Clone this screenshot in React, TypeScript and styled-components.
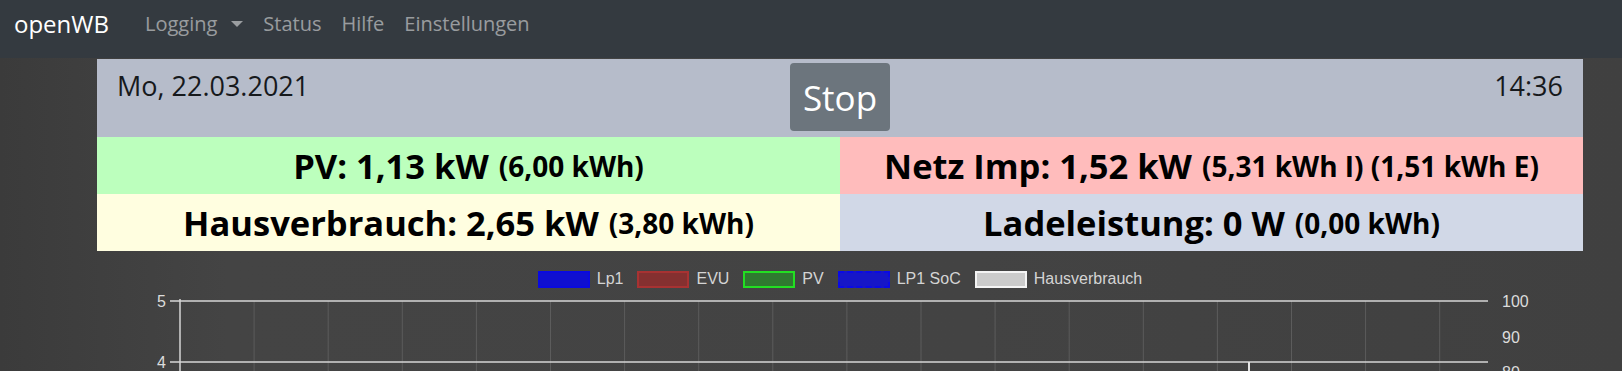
import React from 'react';
import styled, { createGlobalStyle, css } from 'styled-components';

const GlobalStyle = createGlobalStyle`
  html, body {
    margin: 0;
    padding: 0;
  }

  body {
    min-height: 371px;
    overflow: hidden;
    background: linear-gradient(to right, #3b3b3b 0%, #444444 14%, #434343 60%, #404040 100%);
    font-family: "Open Sans", "Noto Sans", sans-serif;
  }
`;

const Navbar = styled.nav`
  display: flex;
  align-items: center;
  box-sizing: border-box;
  height: 58px;
  padding: 0 14px 12px;
  background: #343a40;
`;

const Brand = styled.a`
  margin-right: 26px;
  font-size: 24px;
  color: #fff;
  text-decoration: none;
`;

const NavLink = styled.a<{ $dropdown?: boolean }>`
  padding: 0 10px;
  font-size: 20px;
  color: rgba(255, 255, 255, 0.5);
  text-decoration: none;

  ${({ $dropdown }) =>
    $dropdown &&
    css`
      &::after {
        content: '';
        display: inline-block;
        margin-left: 14px;
        vertical-align: 4px;
        border-top: 6px solid;
        border-left: 6px solid transparent;
        border-right: 6px solid transparent;
      }
    `}
`;

const Main = styled.main`
  width: 1486px;
  margin: 1px 0 0 97px;
`;

const Panel = styled.section`
  display: grid;
  grid-template-columns: 1fr 1fr;
`;

const DateRow = styled.div`
  grid-column: 1 / -1;
  display: grid;
  grid-template-columns: 1fr auto 1fr;
  align-items: start;
  box-sizing: border-box;
  height: 78px;
  padding: 0 20px;
  background: #b6bcca;
  color: #16191c;
`;

const Clock = styled.span<{ $align: 'left' | 'right' }>`
  padding-top: 9px;
  font-size: 27px;
  line-height: 1.36;
  text-align: ${({ $align }) => $align};
`;

const StopButton = styled.button`
  display: flex;
  align-items: center;
  height: 68px;
  margin-top: 4px;
  padding: 0 13px;
  border: none;
  border-radius: 4px;
  background: #6c757d;
  color: #fff;
  font-family: inherit;
  font-size: 35px;
`;

const Cell = styled.div<{ $bg: string }>`
  display: flex;
  align-items: center;
  justify-content: center;
  height: 57px;
  background: ${({ $bg }) => $bg};
  color: #000;
  font-size: 34.5px;
  font-weight: 700;
  white-space: nowrap;

  small {
    margin-left: 10px;
    font-size: 28px;
    font-weight: 700;
  }
`;

const ChartSection = styled.section`
  margin-top: 20px;
`;

const Legend = styled.ul`
  display: flex;
  justify-content: center;
  gap: 14px;
  height: 16px;
  margin: 0;
  padding: 0;
  list-style: none;
`;

const LegendItem = styled.li`
  display: flex;
  align-items: center;
  gap: 7px;
  font-family: "Liberation Sans", Arial, sans-serif;
  font-size: 16px;
  color: #d4d4d4;
`;

const Swatch = styled.span<{ $fill: string; $stroke: string; $dashed?: boolean }>`
  box-sizing: border-box;
  width: 52px;
  height: 17px;
  border: 2px ${({ $dashed }) => ($dashed ? 'dashed' : 'solid')} ${({ $stroke }) => $stroke};
  background: ${({ $fill }) => $fill};
`;

const ChartSvg = styled.svg`
  display: block;
`;

const legendItems = [
  { label: 'Lp1', fill: '#0f0fd0', stroke: '#0a0ae0' },
  { label: 'EVU', fill: '#853030', stroke: '#a83232' },
  { label: 'PV', fill: '#2f7a30', stroke: '#22e022' },
  { label: 'LP1 SoC', fill: '#1616c8', stroke: '#0a0ae6', dashed: true },
  { label: 'Hausverbrauch', fill: '#cbcbcb', stroke: '#f4f4f4' },
];

const cells = [
  { bg: '#bcffbd', main: 'PV: 1,13 kW', sub: '(6,00 kWh)' },
  { bg: '#ffbcbc', main: 'Netz Imp: 1,52 kW', sub: '(5,31 kWh I) (1,51 kWh E)' },
  { bg: '#fffee0', main: 'Hausverbrauch: 2,65 kW', sub: '(3,80 kWh)' },
  { bg: '#d1d8e7', main: 'Ladeleistung: 0 W', sub: '(0,00 kWh)' },
];

const gridXs = Array.from({ length: 17 }, (_, i) => 83 + 74.1 * (i + 1));

const axisText = { fontFamily: '"Liberation Sans", Arial, sans-serif', fontSize: 16, fill: '#dcdcdc' };

const App: React.FC = () => (
  <>
    <GlobalStyle />
    <Navbar>
      <Brand>openWB</Brand>
      <NavLink $dropdown>Logging</NavLink>
      <NavLink>Status</NavLink>
      <NavLink>Hilfe</NavLink>
      <NavLink>Einstellungen</NavLink>
    </Navbar>

    <Main>
      <Panel>
        <DateRow>
          <Clock $align="left">Mo, 22.03.2021</Clock>
          <StopButton>Stop</StopButton>
          <Clock $align="right">14:36</Clock>
        </DateRow>
        {cells.map((c) => (
          <Cell key={c.main} $bg={c.bg}>
            {c.main}
            <small>{c.sub}</small>
          </Cell>
        ))}
      </Panel>

      <ChartSection>
        <Legend>
          {legendItems.map((item) => (
            <LegendItem key={item.label}>
              <Swatch $fill={item.fill} $stroke={item.stroke} $dashed={item.dashed} />
              {item.label}
            </LegendItem>
          ))}
        </Legend>
        <ChartSvg width={1486} height={99} viewBox="0 0 1486 99">
          {gridXs.map((x) => (
            <line key={x} x1={x} y1={14} x2={x} y2={99} stroke="#5c5c5c" strokeWidth={1} />
          ))}
          <line x1={73} y1={14} x2={1391} y2={14} stroke="#d6d6d6" strokeWidth={1.5} />
          <line x1={73} y1={75} x2={1391} y2={75} stroke="#d6d6d6" strokeWidth={1.5} />
          <line x1={83} y1={12} x2={83} y2={99} stroke="#d6d6d6" strokeWidth={1.5} />
          <line x1={1152} y1={75} x2={1152} y2={99} stroke="#e4e4e4" strokeWidth={2} />
          <text x={69} y={20} textAnchor="end" {...axisText}>5</text>
          <text x={69} y={81} textAnchor="end" {...axisText}>4</text>
          <text x={1405} y={20} {...axisText}>100</text>
          <text x={1405} y={56} {...axisText}>90</text>
          <text x={1405} y={91} {...axisText}>80</text>
        </ChartSvg>
      </ChartSection>
    </Main>
  </>
);

export default App;
